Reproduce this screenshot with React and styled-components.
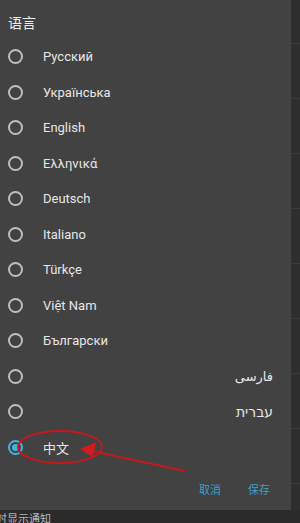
import React from 'react'
import styled, { createGlobalStyle } from "styled-components";

const GlobalStyle = createGlobalStyle`
  html, body {
    margin: 0;
    padding: 0;
    background: #2b2b2b;
    font-family: Roboto, "Noto Sans", "Noto Sans CJK SC", sans-serif;
  }
`;

const Page = styled.div`
  position: relative;
  width: 300px;
  height: 523px;
  overflow: hidden;
  display: flex;
  flex-direction: column;
  background: #2b2b2b;
`;

const Body = styled.div`
  display: flex;
  height: 510px;
`;

const Dialog = styled.div`
  width: 291px;
  background: #424242;
  display: flex;
  flex-direction: column;
`;

const Title = styled.div`
  height: 39px;
  padding-left: 8px;
  display: flex;
  align-items: center;
  padding-top: 4px;
  box-sizing: border-box;
  font-family: "Noto Sans CJK SC", sans-serif;
  font-size: 14px;
  color: #ececec;
`;

const List = styled.div`
  display: flex;
  flex-direction: column;
`;

const Row = styled.div`
  height: 35.5px;
  display: flex;
  align-items: center;
  padding-left: 8px;
  padding-right: 18px;
`;

const Radio = styled.span`
  width: 15px;
  height: 15px;
  box-sizing: border-box;
  border-radius: 50%;
  border: 2px solid ${(p) => (p.checked ? "#46b2df" : "#bdbdbd")};
  display: flex;
  align-items: center;
  justify-content: center;
  flex-shrink: 0;
  &::after {
    content: "";
    display: ${(p) => (p.checked ? "block" : "none")};
    width: 7px;
    height: 7px;
    border-radius: 50%;
    background: #46b2df;
  }
`;

const Label = styled.span`
  flex: 1;
  margin-left: 20px;
  font-size: ${(p) => p.size || 13}px;
  color: #e6e6e6;
  text-align: ${(p) => (p.rtl ? "right" : "left")};
  font-family: Roboto, "DejaVu Sans", "Noto Sans CJK SC", sans-serif;
`;

const Actions = styled.div`
  flex: 1;
  display: flex;
  justify-content: flex-end;
  align-items: center;
  gap: 27px;
  padding-right: 21px;
  padding-top: 2px;
`;

const ActionButton = styled.span`
  font-family: "Noto Sans CJK SC", sans-serif;
  font-size: 11px;
  color: #3d9fcb;
`;

const Strip = styled.div`
  flex: 1;
  background: #2e2e2e;
  display: flex;
  flex-direction: column;
  padding-top: 43px;
`;

const StripCell = styled.div`
  height: 55px;
  flex-shrink: 0;
  border-top: 1px solid #3a3a3a;
  box-sizing: border-box;
`;

const Footer = styled.div`
  flex: 1;
  display: flex;
  align-items: center;
  margin-left: -4px;
  font-family: "Noto Sans CJK SC", sans-serif;
  font-size: 11px;
  color: #b8b8b8;
`;

const Annotation = styled.svg`
  position: absolute;
  left: 0;
  top: 0;
  pointer-events: none;
`;

const languages = [
  { name: "Русский" },
  { name: "Українська" },
  { name: "English" },
  { name: "Ελληνικά" },
  { name: "Deutsch" },
  { name: "Italiano" },
  { name: "Türkçe" },
  { name: "Việt Nam" },
  { name: "Български" },
  { name: "فارسی", rtl: true },
  { name: "עברית", rtl: true, size: 14 },
  { name: "中文", checked: true },
];

const App = () => {
  return (
    <Page>
      <GlobalStyle />
      <Body>
        <Dialog>
          <Title>语言</Title>
          <List>
            {languages.map((l) => (
              <Row key={l.name}>
                <Radio checked={l.checked} />
                <Label rtl={l.rtl} size={l.size} dir={l.rtl ? "rtl" : "ltr"}>{l.name}</Label>
              </Row>
            ))}
          </List>
          <Actions>
            <ActionButton>取消</ActionButton>
            <ActionButton>保存</ActionButton>
          </Actions>
        </Dialog>
        <Strip>
          {Array.from({ length: 9 }).map((_, i) => (
            <StripCell key={i} />
          ))}
        </Strip>
      </Body>
      <Footer>时显示通知</Footer>
      <Annotation width="300" height="523" viewBox="0 0 300 523">
        <ellipse cx="60" cy="447" rx="42" ry="16" fill="none" stroke="#c8171b" strokeWidth="2" />
        <line x1="185" y1="471" x2="92" y2="451" stroke="#c8171b" strokeWidth="2" />
        <polygon points="80,449 96,442 93,457" fill="#d41a1e" />
      </Annotation>
    </Page>
  )
}

export default App
